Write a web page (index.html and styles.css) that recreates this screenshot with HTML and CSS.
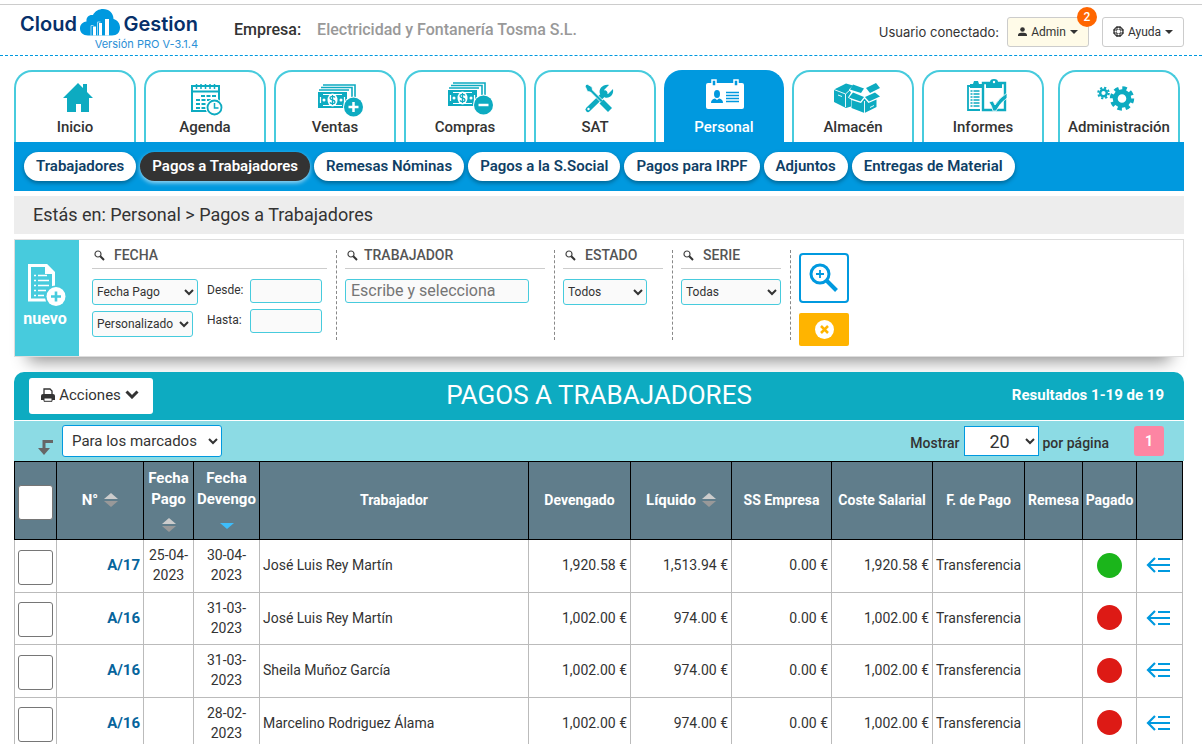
FILE: index.html
```html
<!doctype html>
<html lang="es">
  <head>
    <meta charset="UTF-8" />
    <meta name="viewport" content="width=device-width, initial-scale=1.0" />
    <title>Cloud Gestion - Pagos a Trabajadores</title>
    <link rel="stylesheet" href="styles.css">
  </head>
  <body>
    <!-- Shared icons -->
    <svg class="sprite" aria-hidden="true">
      <symbol id="i-search" viewBox="0 0 11 11">
        <circle cx="4" cy="4" r="3" fill="none" stroke="#444" stroke-width="1.2" />
        <path d="M6.3 6.3L10 10" stroke="#333" stroke-width="2" />
      </symbol>
      <symbol id="i-sort" viewBox="0 0 14 14">
        <path d="M7 0L14 6H0z" fill="#ccc" />
        <path d="M0 8h14L7 14z" fill="#999" />
      </symbol>
      <symbol id="i-sort-desc" viewBox="0 0 14 14">
        <path d="M0 5h14L7 11z" fill="#3dbdfb" />
      </symbol>
      <symbol id="i-menu" viewBox="0 0 24 16">
        <path d="M9 1L2 8l7 7M2 8h22M12 2h12M12 14h12" fill="none" stroke="#0099df" stroke-width="2.2" />
      </symbol>
      <symbol id="i-bills" viewBox="0 0 38 24">
        <path d="M5 1h32v16M3 3.500h31v16M1 6h30" fill="none" stroke="#0dabc1" stroke-width="1.600" />
        <rect x="0" y="8" width="29" height="16" fill="#0dabc1" />
        <path d="M5 10.500h19M5 21.500h19M2.500 13v6M26.500 13v6" stroke="#fff" stroke-width="1.200" />
        <circle cx="6" cy="16" r="1.500" fill="#fff" />
        <circle cx="23" cy="16" r="1.500" fill="#fff" />
        <ellipse cx="14.500" cy="16" rx="5" ry="6.500" fill="#fff" />
        <path d="M17 13.500c-1-1.600-5-1.500-5 .6 0 2.400 5 1.400 5 3.800 0 2.200-4 2.400-5 .5M14.500 11v10" fill="none" stroke="#0dabc1" stroke-width="1.300" />
      </symbol>
    </svg>

    <header class="topbar">
      <a class="logo" href="#">
        <span class="logo-row">
          Cloud
          <svg width="40" height="27" viewBox="0 0 40 27" aria-hidden="true">
            <path d="M8 26.500C3 26.500 0 23.500 0 19.500c0-4 2.500-6.500 6.500-7C6 8 9 5.500 13 6c2-4 6-6 10-6 6 0 10.500 4 10.500 10C37.500 11 40 14.500 40 18.500c0 5-3 8-8 8z" fill="#0099df" />
            <path d="M13 17.500h3v9h-3zM19 14h3v12.500h-3zM25 10h4v16.500h-4z" fill="#fff" />
            <path d="M11 27V16.500h2.500M17.500 27V13h3" fill="none" stroke="#9ad6f3" />
          </svg>
          Gestion
        </span>
        <span class="version">Versión PRO V-3.1.4</span>
      </a>
      <p class="company">Empresa: <span>Electricidad y Fontanería Tosma S.L.</span></p>
      <div class="user">
        <span class="user-label">Usuario conectado:</span>
        <button class="btn-top btn-admin" type="button">
          <svg width="9" height="9" viewBox="0 0 9 9" aria-hidden="true"><circle cx="4.500" cy="2.500" r="2.300" fill="#333" /><path d="M0 9V7.500Q.5 6 3 5.700h3Q8.500 6 9 7.500V9z" fill="#333" /></svg>
          Admin <i class="caret"></i>
          <span class="badge">2</span>
        </button>
        <button class="btn-top" type="button">
          <svg width="11" height="11" viewBox="0 0 11 11" aria-hidden="true"><circle cx="5.500" cy="5.500" r="4.500" fill="none" stroke="#333" stroke-width="1.300" /><path d="M4 0v11M7 0v11M0 4h11M0 7h11" stroke="#333" /><circle cx="5.500" cy="5.500" r="1.800" fill="#fff" /></svg>
          Ayuda <i class="caret"></i>
        </button>
      </div>
    </header>

    <main class="page">
      <nav class="tabs">
        <a href="#">
          <svg viewBox="0 0 56 40"><path d="M31 5l5 5V6h4v8l6 6h-4v14h-8v-8h-5v8h-9V20h-4z" fill="#0dabc1" /></svg>
          Inicio
        </a>
        <a href="#">
          <svg viewBox="0 0 56 40">
            <path d="M15 8h27v25H15zM15 13.500h27" fill="none" stroke="#0dabc1" stroke-width="2" />
            <path d="M19.500 6v5M24 6v5M28.500 6v5M33 6v5M37.500 6v5" stroke="#0dabc1" stroke-width="1.500" />
            <path d="M24 18h15M19 22h20M19 26h12M19 30h10" stroke="#0dabc1" stroke-width="2" stroke-dasharray="4 1.500" />
            <circle cx="37.500" cy="29.500" r="9" fill="#fff" />
            <circle cx="37.500" cy="29.500" r="7" fill="#fff" stroke="#0dabc1" stroke-width="1.800" />
            <path d="M37.500 25v5h4" fill="none" stroke="#0dabc1" stroke-width="1.500" />
          </svg>
          Agenda
        </a>
        <a href="#">
          <svg viewBox="0 0 56 40">
            <use href="#i-bills" x="11" y="6" width="38" height="24" />
            <circle cx="46.500" cy="29" r="10.500" fill="#fff" />
            <circle cx="46.500" cy="29" r="9.500" fill="#0dabc1" />
            <path d="M41.500 29h10M46.500 24v10" stroke="#fff" stroke-width="2.500" />
          </svg>
          Ventas
        </a>
        <a href="#">
          <svg viewBox="0 0 56 40">
            <use href="#i-bills" x="11" y="4" width="38" height="24" />
            <circle cx="46.500" cy="27" r="10.500" fill="#fff" />
            <circle cx="46.500" cy="27" r="9.500" fill="#0dabc1" />
            <path d="M41.500 27h10" stroke="#fff" stroke-width="2.500" />
          </svg>
          Compras
        </a>
        <a href="#">
          <svg viewBox="0 0 56 40">
            <path d="M21 31.500L38 15" stroke="#0dabc1" stroke-width="5" stroke-linecap="round" />
            <path d="M42 7l-5 5 1 3 3 1 5-5c1 6-3 9.500-8 8.500L33 16c-2-5 3-10 9-9z" fill="#0dabc1" />
            <circle cx="21.500" cy="31" r="1.200" fill="#fff" />
            <path d="M18 8l2-2 5 3 .5 3L36 22.500l-2 2L23.500 14l-3-.5z" fill="#0dabc1" stroke="#fff" stroke-width=".8" />
            <path d="M32.500 25.500l4-4 8.500 8.500-4 4z" fill="#0dabc1" />
          </svg>
          SAT
        </a>
        <a class="active" href="#">
          <svg viewBox="0 0 56 40">
            <rect x="10" y="5" width="38" height="26" rx="2" fill="#fff" />
            <path d="M16 2h4v6h-4zM38 2h4v6h-4z" fill="#0099df" stroke="#fff" stroke-width="1.500" />
            <ellipse cx="21" cy="16" rx="3" ry="4" fill="#0099df" />
            <path d="M15 25q0-4 4-4.500l2 1.500 2-1.500q4 .5 4 4.500z" fill="#0099df" />
            <path d="M30 14.500h13M30 17.500h13M30 20.500h13M30 23.500h13" stroke="#0099df" stroke-width="1.500" />
          </svg>
          Personal
        </a>
        <a href="#">
          <svg viewBox="0 0 56 40">
            <path d="M9 11.500L21 5.500l7 2-4 4 2 3-3 5 3 2v7l-5 1.500-12-6z" fill="#0dabc1" />
            <path d="M9 11.500l11.500 4.500 5-4.500M20.500 16v13M13 17l4 1.500" fill="none" stroke="#fff" stroke-width=".9" />
            <path d="M28 6.500l11 4-3 4.500-11-3.500z" fill="#0dabc1" />
            <path d="M41 10l10-5 4 5-10 5z" fill="#0dabc1" />
            <path d="M28 14.500L39 19l-3.500 4.500-11.500-4z" fill="#0dabc1" />
            <path d="M40 19l10-4.500 5 4-11 5z" fill="#0dabc1" />
            <path d="M26.500 22l9.500 3 3.500-4.500 4 4.500 8-3.500v7.500L39.500 35l-13-5z" fill="#0dabc1" />
            <path d="M39.500 23v12M45 29.500l4-2" fill="none" stroke="#fff" stroke-width=".9" />
          </svg>
          Almacén
        </a>
        <a href="#">
          <svg viewBox="0 0 56 40">
            <path d="M26 8H13v24h12" fill="none" stroke="#0dabc1" stroke-width="1.800" />
            <path d="M15 6h3l1-3h4l1 3h3v4H15z" fill="#0dabc1" />
            <path d="M15.500 13h9M15.500 16h9M15.500 19h9M15.500 22h9M15.500 25h9M15.500 28h9" stroke="#0dabc1" stroke-width="1.300" stroke-dasharray="2 1 6 0" />
            <path d="M28 5h22v27H28z" fill="#fff" stroke="#0dabc1" stroke-width="2.400" />
            <path d="M31 4h4q0-3 4-3t4 3h4v6H31z" fill="#0dabc1" />
            <circle cx="39" cy="4" r="1.200" fill="#fff" />
            <path d="M34 24l4-1 2 4q4-7 12-12v5q-7 5-11 13h-3q-1-5-4-9z" fill="#0dabc1" stroke="#fff" stroke-width=".8" />
          </svg>
          Informes
        </a>
        <a href="#">
          <svg viewBox="0 0 56 40">
            <circle cx="12.500" cy="15" r="3.300" fill="none" stroke="#0dabc1" stroke-width="2.400" />
            <circle cx="12.500" cy="15" r="5.300" fill="none" stroke="#0dabc1" stroke-width="2" stroke-dasharray="2.160 2" />
            <circle cx="31" cy="20.500" r="6.800" fill="none" stroke="#0dabc1" stroke-width="5" />
            <circle cx="31" cy="20.500" r="10.200" fill="none" stroke="#0dabc1" stroke-width="4" stroke-dasharray="4.400 3.610" />
          </svg>
          Administración
        </a>
      </nav>

      <nav class="subnav">
        <a href="#">Trabajadores</a>
        <a class="active" href="#">Pagos a Trabajadores</a>
        <a href="#">Remesas Nóminas</a>
        <a href="#">Pagos a la S.Social</a>
        <a href="#">Pagos para IRPF</a>
        <a href="#">Adjuntos</a>
        <a href="#">Entregas de Material</a>
      </nav>

      <p class="breadcrumb">Estás en: Personal &gt; Pagos a Trabajadores</p>

      <form class="filters">
        <a class="new" href="#">
          <svg width="42" height="46" viewBox="0 0 42 46" aria-hidden="true">
            <path d="M5.500 2.500h17l7 7v16M5.500 1v36H22" fill="none" stroke="#fff" stroke-width="3" />
            <path d="M21 2v9h9z" fill="#fff" />
            <path d="M10 12.500h2M14 12.500h9M10 17.500h2M14 17.500h11M10 22.500h2M14 22.500h11M10 27.500h2M14 27.500h8M10 32.500h2M14 32.500h6" stroke="#fff" stroke-width="1.600" />
            <circle cx="32" cy="33.500" r="11" fill="#47cbdd" />
            <circle cx="32" cy="33.500" r="9.500" fill="#fff" />
            <path d="M27 33.500h10M32 28.500v10" stroke="#47cbdd" stroke-width="2.600" />
          </svg>
          nuevo
        </a>
        <fieldset class="filter filter-date">
          <h2><svg><use href="#i-search" /></svg>FECHA</h2>
          <div class="date-grid">
            <div class="date-selects">
              <select class="w-type" aria-label="Tipo de fecha"><option>Fecha Pago</option></select>
              <select class="w-range" aria-label="Periodo"><option>Personalizado</option></select>
            </div>
            <div class="date-inputs">
              <label for="desde">Desde:</label><input type="text" id="desde" />
              <label for="hasta">Hasta:</label><input type="text" id="hasta" />
            </div>
          </div>
        </fieldset>
        <fieldset class="filter filter-worker">
          <h2><svg><use href="#i-search" /></svg><label for="trabajador">TRABAJADOR</label></h2>
          <input type="text" id="trabajador" placeholder="Escribe y selecciona" />
        </fieldset>
        <fieldset class="filter filter-short">
          <h2><svg><use href="#i-search" /></svg><label for="estado">ESTADO</label></h2>
          <select class="w-state" id="estado"><option>Todos</option></select>
        </fieldset>
        <fieldset class="filter filter-short">
          <h2><svg><use href="#i-search" /></svg><label for="serie">SERIE</label></h2>
          <select class="w-serie" id="serie"><option>Todas</option></select>
        </fieldset>
        <div class="filter-actions">
          <button class="btn-find" type="button" aria-label="Buscar">
            <svg width="30" height="30" viewBox="0 0 30 30"><circle cx="11" cy="11" r="9" fill="none" stroke="#0099df" stroke-width="3" /><path d="M7 11h8M11 7v8" stroke="#0099df" stroke-width="1.800" /><path d="M17 17l10.500 10.500" stroke="#0099df" stroke-width="4" /></svg>
          </button>
          <button class="btn-clear" type="button" aria-label="Limpiar">
            <svg width="19" height="19" viewBox="0 0 19 19"><circle cx="9.500" cy="9.500" r="9.500" fill="#fff" /><path d="M6 6l7 7M13 6l-7 7" stroke="#ffb400" stroke-width="2.500" /></svg>
          </button>
        </div>
      </form>

      <section class="listing">
        <div class="list-head">
          <button class="btn-actions" type="button">
            <svg width="14" height="14" viewBox="0 0 14 14" aria-hidden="true"><path d="M3 7V1h6l2 2v4" fill="#fff" stroke="#333" stroke-width="1.300" /><path d="M0 8q0-2 2-2h10q2 0 2 2v4H0z" fill="#333" /><path d="M3 10h8v3.300H3z" fill="#fff" stroke="#333" /></svg>
            Acciones
            <svg width="14" height="9" viewBox="0 0 14 9" aria-hidden="true"><path d="M1.500 1.500L7 7l5.500-5.500" fill="none" stroke="#333" stroke-width="3" /></svg>
          </button>
          <h1>PAGOS A TRABAJADORES</h1>
          <p>Resultados 1-19 de 19</p>
        </div>
        <div class="list-tools">
          <svg class="turn" width="16" height="17" viewBox="0 0 16 17" aria-hidden="true"><path d="M15 2.500H6V11" fill="none" stroke="#666" stroke-width="3" /><path d="M0 9h12l-6 7z" fill="#666" /></svg>
          <select class="bulk" aria-label="Para los marcados"><option>Para los marcados</option></select>
          <label for="mostrar">Mostrar</label>
          <select class="per-page" id="mostrar"><option>20</option></select>
          <label for="mostrar">por página</label>
          <a class="page-number" href="#">1</a>
        </div>

        <table>
          <colgroup>
            <col class="c-check"><col class="c-num"><col class="c-paid-on"><col class="c-due">
            <col><col class="c-accrued"><col class="c-net"><col class="c-ss">
            <col class="c-cost"><col class="c-method"><col class="c-batch"><col class="c-state"><col class="c-menu">
          </colgroup>
          <thead>
            <tr>
              <th><input type="checkbox" aria-label="Marcar todos" /></th>
              <th><button type="button">N° <svg><use href="#i-sort" /></svg></button></th>
              <th><button class="stacked" type="button">Fecha Pago <svg><use href="#i-sort" /></svg></button></th>
              <th><button class="stacked" type="button">Fecha Devengo <svg><use href="#i-sort-desc" /></svg></button></th>
              <th>Trabajador</th>
              <th>Devengado</th>
              <th><button type="button">Líquido <svg><use href="#i-sort" /></svg></button></th>
              <th>SS Empresa</th>
              <th>Coste Salarial</th>
              <th>F. de Pago</th>
              <th>Remesa</th>
              <th>Pagado</th>
              <th></th>
            </tr>
          </thead>
          <tbody>
            <tr>
              <td><input type="checkbox" aria-label="Marcar A/17" /></td>
              <td class="num"><a href="#">A/17</a></td>
              <td class="date">25-04-2023</td>
              <td class="date">30-04-2023</td>
              <td>José Luis Rey Martín</td>
              <td class="num">1,920.58 €</td>
              <td class="num">1,513.94 €</td>
              <td class="num">0.00 €</td>
              <td class="num">1,920.58 €</td>
              <td>Transferencia</td>
              <td></td>
              <td><span class="dot paid"></span></td>
              <td><button class="row-menu" type="button" aria-label="Opciones"><svg><use href="#i-menu" /></svg></button></td>
            </tr>
            <tr>
              <td><input type="checkbox" aria-label="Marcar A/16" /></td>
              <td class="num"><a href="#">A/16</a></td>
              <td class="date"></td>
              <td class="date">31-03-2023</td>
              <td>José Luis Rey Martín</td>
              <td class="num">1,002.00 €</td>
              <td class="num">974.00 €</td>
              <td class="num">0.00 €</td>
              <td class="num">1,002.00 €</td>
              <td>Transferencia</td>
              <td></td>
              <td><span class="dot"></span></td>
              <td><button class="row-menu" type="button" aria-label="Opciones"><svg><use href="#i-menu" /></svg></button></td>
            </tr>
            <tr>
              <td><input type="checkbox" aria-label="Marcar A/16" /></td>
              <td class="num"><a href="#">A/16</a></td>
              <td class="date"></td>
              <td class="date">31-03-2023</td>
              <td>Sheila Muñoz García</td>
              <td class="num">1,002.00 €</td>
              <td class="num">974.00 €</td>
              <td class="num">0.00 €</td>
              <td class="num">1,002.00 €</td>
              <td>Transferencia</td>
              <td></td>
              <td><span class="dot"></span></td>
              <td><button class="row-menu" type="button" aria-label="Opciones"><svg><use href="#i-menu" /></svg></button></td>
            </tr>
            <tr>
              <td><input type="checkbox" aria-label="Marcar A/16" /></td>
              <td class="num"><a href="#">A/16</a></td>
              <td class="date"></td>
              <td class="date">28-02-2023</td>
              <td>Marcelino Rodriguez Álama</td>
              <td class="num">1,002.00 €</td>
              <td class="num">974.00 €</td>
              <td class="num">0.00 €</td>
              <td class="num">1,002.00 €</td>
              <td>Transferencia</td>
              <td></td>
              <td><span class="dot"></span></td>
              <td><button class="row-menu" type="button" aria-label="Opciones"><svg><use href="#i-menu" /></svg></button></td>
            </tr>
          </tbody>
        </table>
      </section>
    </main>
  </body>
</html>
```
FILE: styles.css
```css
* {
  box-sizing: border-box;
}
body {
  margin: 0;
  padding-top: 4px;
  background: #fff;
  color: #333;
  font-family: Roboto, sans-serif;
  font-size: 14px;
  line-height: 20px;
}
a {
  color: inherit;
  text-decoration: none;
}
h1,
h2,
p {
  margin: 0;
}
button,
input,
select {
  font-family: inherit;
  color: inherit;
}
button {
  cursor: pointer;
}
.sprite {
  display: none;
}

/* Top bar */
.topbar {
  display: flex;
  align-items: center;
  height: 52px;
  padding: 0 18px 0 20px;
  border-top: 1px solid #ccc;
  border-bottom: 1px dashed #0099df;
}
.logo {
  display: flex;
  flex-direction: column;
  width: 178px;
  font-family: Inter, sans-serif;
}
.logo-row {
  display: flex;
  align-items: flex-end;
  justify-content: space-between;
  height: 27px;
  color: #06306a;
  font-size: 20px;
  font-weight: 600;
  line-height: 23px;
}
.version {
  align-self: flex-end;
  color: #2b8fd6;
  font-size: 11px;
  line-height: 16px;
}
.company {
  margin-left: 36px;
  font-size: 16px;
  font-weight: 500;
}
.company span {
  margin-left: 12px;
  color: #999;
}
.user {
  display: flex;
  align-items: center;
  margin: 3px 0 0 auto;
}
.user-label {
  margin-right: 8px;
  font-family: Inter, sans-serif;
  font-size: 13px;
}
.btn-top {
  position: relative;
  display: flex;
  align-items: center;
  justify-content: center;
  gap: 4px;
  width: 82px;
  height: 30px;
  padding: 0;
  border: 1px solid #ccc;
  border-radius: 3px;
  background: #fff;
  font-size: 12px;
}
.btn-admin {
  margin-right: 13px;
  background: #fffbe8;
}
.caret {
  border: 4px solid transparent;
  border-top-color: #333;
  border-bottom: 0;
}
.badge {
  position: absolute;
  top: -11px;
  right: -9px;
  width: 20px;
  border-radius: 50%;
  background: #f60;
  color: #fff;
  font-weight: 500;
  line-height: 20px;
}

.page {
  padding: 14px 18px 0 14px;
}

/* Main tabs */
.tabs {
  display: flex;
  gap: 8px;
  padding-right: 4px;
}
.tabs a {
  display: flex;
  flex: 1 1 122px;
  flex-direction: column;
  align-items: center;
  height: 72px;
  padding-top: 6px;
  border: 2px solid #47cbdd;
  border-bottom: 0;
  border-radius: 18px 18px 0 0;
  font-size: 15px;
  font-weight: 500;
}
.tabs a.active {
  flex-basis: 120px;
  border-color: #0099df;
  background: #0099df;
  color: #fff;
}
.tabs a:last-child {
  margin-left: 6px;
}
.tabs svg {
  width: 56px;
  height: 40px;
  margin-bottom: -1px;
}

.subnav {
  display: flex;
  flex-wrap: wrap;
  gap: 4px;
  padding: 10px;
  background: #0099df;
  color: #0f3f66;
}
.subnav a {
  padding: 0 12px;
  border-radius: 15px;
  background: #fff;
  box-shadow: 0 2px 4px rgba(0, 0, 0, 0.35);
  font-size: 15px;
  font-weight: 600;
  line-height: 29px;
}
.subnav a.active {
  background: #333;
  box-shadow: 0 2px 4px rgba(255, 255, 255, 0.6);
  color: #fff;
}

.breadcrumb {
  margin: 5px 0;
  padding-left: 19px;
  background: #ededed;
  font-size: 18px;
  line-height: 38px;
}

/* Filters */
.filters {
  display: flex;
  min-height: 118px;
  border: 1px solid #ddd;
  background: #fff;
  box-shadow: 0 18px 16px -14px rgba(0, 0, 0, 0.45);
}
.new {
  display: flex;
  flex-direction: column;
  align-items: center;
  justify-content: center;
  width: 64px;
  margin-right: 4px;
  padding: 0 4px 4px 0;
  background: #47cbdd;
  color: #fff;
  font-size: 16px;
  font-weight: 700;
}
.filter {
  height: 90px;
  margin: 10px 0 0;
  padding: 0 9px 0 8px;
  border: 0;
  border-right: 1px dashed #888;
}
.filter h2 {
  display: flex;
  align-items: center;
  gap: 9px;
  margin-bottom: 10px;
  padding: 0 3px 8px 2px;
  height: 19px;
  border-bottom: 1px solid #ccc;
  color: #555;
  font-size: 14px;
  font-weight: 500;
  line-height: 14px;
}
.filter h2 svg {
  width: 11px;
  height: 11px;
}
.filter select,
.filter input {
  display: block;
  height: 26px;
  border: 1px solid #47cbdd;
  border-radius: 3px;
  background: #fafafa;
  font-size: 12px;
}
.filter input {
  height: 24px;
}
.filter-date {
  width: 254px;
  padding-left: 9px;
}
.filter-worker {
  width: 218px;
}
.filter-worker h2 {
  gap: 6px;
}
.filter-short {
  width: 118px;
}
.date-grid {
  display: flex;
  gap: 9px;
}
.date-selects {
  display: grid;
  gap: 6px;
  align-content: start;
}
.date-inputs {
  display: grid;
  grid-template-columns: 43px 72px;
  gap: 6px 0;
  align-content: start;
  font-size: 12px;
}
.date-inputs label {
  line-height: 22px;
}
.date-inputs input {
  width: 72px;
}
.filter .w-type {
  width: 106px;
}
.filter .w-range {
  width: 101px;
}
.filter .w-state {
  width: 84px;
}
.filter .w-serie {
  width: 100px;
}
.filter-worker input {
  width: 184px;
  padding: 0 5px 2px;
  font-size: 16px;
}
.filter-actions {
  display: grid;
  gap: 10px;
  align-content: start;
  width: 50px;
  margin: 13px 0 0 8px;
}
.filter-actions button {
  display: flex;
  align-items: center;
  justify-content: center;
  height: 50px;
  padding: 0;
  border: 2px solid #0099df;
  border-radius: 4px;
  background: #fff;
}
.filter-actions .btn-clear {
  height: 33px;
  border: 0;
  border-radius: 2px;
  background: #ffb400;
}

/* Listing */
.listing {
  position: relative;
  margin-top: 15px;
}
.list-head {
  display: grid;
  grid-template-columns: 1fr auto 1fr;
  align-items: center;
  height: 49px;
  padding: 0 20px 1px 15px;
  border-bottom: 1px solid #fff;
  border-radius: 10px 10px 0 0;
  background: #0dabc1;
  color: #fff;
}
.list-head h1,
.list-head p {
  padding-bottom: 2px;
}
.list-head h1 {
  padding-left: 5px;
  font-size: 26px;
  font-weight: 400;
}
.list-head p {
  text-align: right;
  font-size: 15px;
  font-weight: 700;
}
.btn-actions {
  display: flex;
  align-items: center;
  justify-content: center;
  justify-self: start;
  gap: 4px;
  width: 124px;
  height: 36px;
  padding: 0 2px 2px 0;
  border: 0;
  border-radius: 3px;
  background: #fff;
  color: #333;
  font-size: 15px;
}
.list-tools {
  display: flex;
  align-items: center;
  gap: 4px;
  height: 40px;
  padding: 0 20px 0 24px;
  background: #8cdbe4;
  font-weight: 500;
}
.turn {
  margin: 12px 4px 0 0;
}
.list-tools label {
  padding-top: 3px;
}
.list-tools select {
  border: 1px solid #0099df;
  background: #fff;
}
.list-tools .bulk {
  width: 160px;
  height: 32px;
  margin-right: auto;
  padding-left: 5px;
  border-radius: 3px;
  font-size: 15px;
}
.list-tools .per-page {
  width: 75px;
  height: 30px;
  padding-left: 21px;
  font-size: 18px;
}
.page-number {
  width: 30px;
  margin-left: 21px;
  border-radius: 3px;
  background: #fd85a3;
  color: #fff;
  font-weight: 700;
  line-height: 30px;
  text-align: center;
}

table {
  width: calc(100% - 1px);
  border-collapse: collapse;
  table-layout: fixed;
}
th,
td {
  padding: 0 3px 2px;
  border: 1px solid #bbb;
}
th {
  height: 78px;
  padding: 0 0 2px;
  border-color: #000;
  background: #607d8b;
  color: #fff;
  font-weight: 700;
}
th button {
  display: inline-flex;
  align-items: center;
  gap: 6px;
  padding: 0;
  border: 0;
  background: none;
  font-size: 15px;
  font-weight: 700;
}
th button.stacked {
  flex-direction: column;
  gap: 8px;
  line-height: 21px;
}
th svg {
  width: 14px;
  height: 14px;
}
tbody tr {
  height: 52px;
}
tbody tr:nth-child(odd) {
  height: 53px;
}
.c-check { width: 42px; }
.c-num { width: 87px; }
.c-paid-on { width: 50px; }
.c-due { width: 66px; }
.c-accrued { width: 102px; }
.c-net { width: 101px; }
.c-ss { width: 100px; }
.c-cost { width: 101px; }
.c-method { width: 92px; }
.c-batch { width: 58px; }
.c-state { width: 54px; }
.c-menu { width: 46px; }

.num {
  text-align: right;
}
.num a {
  color: #06649c;
  font-size: 15px;
  font-weight: 700;
}
.date {
  text-align: center;
}
input[type="checkbox"] {
  display: block;
  width: 35px;
  height: 35px;
  margin: 0;
  border: 1px solid #767676;
  border-radius: 3px;
  background: #fff;
  appearance: none;
}
th input[type="checkbox"] {
  margin: 5px auto 0;
}
td input[type="checkbox"] {
  margin-top: 4px;
}
.dot {
  display: block;
  width: 25px;
  height: 25px;
  margin: 0 auto;
  border-radius: 50%;
  background: #dd1a15;
}
.dot.paid {
  background: #1bb51b;
}
.row-menu {
  display: block;
  margin: 0 auto;
  padding: 0 3px 0 0;
  border: 0;
  background: none;
}
.row-menu svg {
  display: block;
  width: 24px;
  height: 16px;
}
```
